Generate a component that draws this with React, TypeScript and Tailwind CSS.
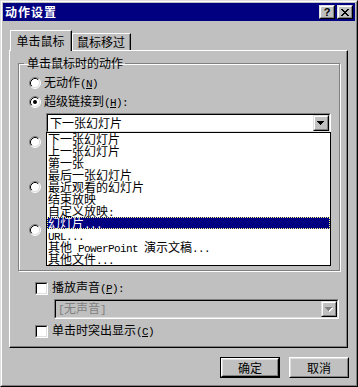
import React from 'react';

const mono = "font-['Liberation_Mono',monospace] text-[11px] tracking-[-0.6px]";
const ARROW = 'M0 0h7v1H0zM1 1h5v1H1zM2 2h3v1H2zM3 3h1v1H3z';
const CLOSE =
    'M0 0h2v1H0zM6 0h2v1H6zM1 1h2v1H1zM5 1h2v1H5zM2 2h4v1H2zM3 3h2v1H3zM2 4h4v1H2zM1 5h2v1H1zM5 5h2v1H5zM0 6h2v1H0zM6 6h2v1H6z';

// splits a label into CJK runs and half-width latin runs; "&X" marks the mnemonic
const Txt: React.FC<{ t: string }> = ({ t }) => {
    const parts = t.match(/[\x00-\x7f]+|[^\x00-\x7f]+/g) || [];
    return (
        <>
            {parts.map((p, i) => {
                if (!/^[\x00-\x7f]/.test(p)) return <span key={i}>{p}</span>;
                const amp = p.indexOf('&');
                if (amp < 0) return <span key={i} className={mono}>{p}</span>;
                return (
                    <span key={i} className={mono}>
                        {p.slice(0, amp)}
                        <span className="underline underline-offset-[1px]">{p[amp + 1]}</span>
                        {p.slice(amp + 2)}
                    </span>
                );
            })}
        </>
    );
};

const Radio: React.FC<{ checked?: boolean }> = ({ checked }) => (
    <svg width="12" height="12" viewBox="0 0 12 12" className="shrink-0">
        <circle cx="6" cy="6" r="5" fill="#fff" />
        <path d="M2.11 9.89A5.5 5.5 0 0 1 9.89 2.11" fill="none" stroke="#808080" />
        <path d="M9.89 2.11A5.5 5.5 0 0 1 2.11 9.89" fill="none" stroke="#fff" />
        <path d="M2.82 9.18A4.5 4.5 0 0 1 9.18 2.82" fill="none" stroke="#000" />
        <path d="M9.18 2.82A4.5 4.5 0 0 1 2.82 9.18" fill="none" stroke="#dfdfdf" />
        {checked && <circle cx="6" cy="6" r="2" fill="#000" />}
    </svg>
);

const Check = () => (
    <div className="w-[13px] h-[13px] shrink-0 border border-t-[#808080] border-l-[#808080] border-r-white border-b-white">
        <div className="h-full bg-white border border-t-black border-l-black border-r-[#dfdfdf] border-b-[#dfdfdf]" />
    </div>
);

const Raised: React.FC<{ className?: string; children?: React.ReactNode }> = ({ className = '', children }) => (
    <div className={`shrink-0 border border-t-[#dfdfdf] border-l-[#dfdfdf] border-r-black border-b-black ${className}`}>
        <div className="h-full bg-[#c0c0c0] border border-t-white border-l-white border-r-[#808080] border-b-[#808080] flex items-center justify-center">
            {children}
        </div>
    </div>
);

const Arrow: React.FC<{ disabled?: boolean }> = ({ disabled }) => (
    <svg width="8" height="5" viewBox="0 0 8 5">
        {disabled && <path d={ARROW} fill="#fff" transform="translate(1 1)" />}
        <path d={ARROW} fill={disabled ? '#808080' : '#000'} />
    </svg>
);

const Combo: React.FC<{ value?: string; disabled?: boolean; className?: string; children?: React.ReactNode }> = ({
    value = '',
    disabled,
    className = '',
    children,
}) => (
    <div className={`relative w-[285px] h-[20px] border border-t-[#808080] border-l-[#808080] border-r-white border-b-white ${className}`}>
        <div
            className={`h-full flex items-center border border-t-black border-l-black border-r-[#dfdfdf] border-b-[#dfdfdf] ${
                disabled ? 'bg-[#c0c0c0] text-[#808080]' : 'bg-white'
            }`}
        >
            <span className="flex-1 pl-[2px] whitespace-pre">
                <Txt t={value} />
            </span>
            <Raised className="w-[16px] h-[16px]">
                <Arrow disabled={disabled} />
            </Raised>
        </div>
        {children}
    </div>
);

const Option: React.FC<{ label?: string; checked?: boolean; className?: string }> = ({ label, checked, className = '' }) => (
    <div className={`h-[16px] flex items-center gap-[3px] whitespace-pre ${className}`}>
        <Radio checked={checked} />
        {label && (
            <span>
                <Txt t={label} />
            </span>
        )}
    </div>
);

const CheckRow: React.FC<{ label: string; className?: string }> = ({ label, className = '' }) => (
    <div className={`h-[16px] flex items-center gap-[4px] whitespace-pre ${className}`}>
        <Check />
        <span>
            <Txt t={label} />
        </span>
    </div>
);

const Button: React.FC<{ label: string; isDefault?: boolean }> = ({ label, isDefault }) => (
    <div className={`w-[60px] h-[21px] ${isDefault ? 'border border-black' : ''}`}>
        <div className="h-full border border-t-white border-l-white border-r-black border-b-black">
            <div className="h-full border border-t-[#dfdfdf] border-l-[#dfdfdf] border-r-[#808080] border-b-[#808080] flex items-center justify-center">
                {label}
            </div>
        </div>
    </div>
);

const LINKS = [
    '下一张幻灯片',
    '上一张幻灯片',
    '第一张',
    '最后一张幻灯片',
    '最近观看的幻灯片',
    '结束放映',
    '自定义放映:',
    '幻灯片...',
    'URL...',
    '其他 PowerPoint 演示文稿...',
    '其他文件...',
];
const SELECTED = 7;

export default function App() {
    return (
        <div className="w-[358px] h-[387px] bg-[#c0c0c0] font-['Noto_Sans_CJK_SC',sans-serif] text-[12px] leading-[12px] text-black select-none">
            <div className="h-full border border-t-[#dfdfdf] border-l-[#dfdfdf] border-r-black border-b-black">
                <div className="h-full p-px flex flex-col border border-t-white border-l-white border-r-[#808080] border-b-[#808080]">
                    {/* title bar */}
                    <div className="h-[18px] shrink-0 bg-[#000080] flex items-center px-[2px]">
                        <span className="text-white font-bold tracking-[1px]">动作设置</span>
                        <div className="ml-auto flex gap-[2px]">
                            <Raised className="w-[16px] h-[14px]">
                                <span className="font-['Liberation_Sans',sans-serif] font-bold text-[11px] leading-none">?</span>
                            </Raised>
                            <Raised className="w-[16px] h-[14px]">
                                <svg width="8" height="7" viewBox="0 0 8 7">
                                    <path d={CLOSE} fill="#000" />
                                </svg>
                            </Raised>
                        </div>
                    </div>

                    {/* tabs */}
                    <div className="mt-[9px] ml-[7px] h-[20px] flex items-end">
                        <div className="relative z-10 -mb-px w-[62px] h-[21px] bg-[#c0c0c0] border-t border-l border-r border-t-white border-l-white border-r-black">
                            <div className="h-full border-r border-r-[#808080] flex items-center justify-center">单击鼠标</div>
                        </div>
                        <div className="w-[59px] h-[17px] border-t border-l border-r border-t-white border-l-white border-r-black">
                            <div className="h-full border-r border-r-[#808080] flex items-center justify-center">鼠标移过</div>
                        </div>
                    </div>

                    {/* tab page */}
                    <div className="ml-[6px] w-[339px] h-[298px] border border-t-white border-l-white border-r-black border-b-black">
                        <div className="h-full pl-[8px] pt-[6px] border-r border-b border-r-[#808080] border-b-[#808080]">
                            <fieldset className="w-[322px] h-[214px] border border-[#808080] shadow-[1px_1px_0_#fff,inset_1px_1px_0_#fff]">
                                <legend className="ml-[5px] pl-[3px] pr-[2px] leading-[12px]">单击鼠标时的动作</legend>
                                <div className="pl-[10px]">
                                    <Option label="无动作(&N)" className="mt-[6px]" />
                                    <Option label="超级链接到(&H):" checked className="mt-[3px]" />
                                    <Combo value="下一张幻灯片" className="ml-[17px] mt-[3px]">
                                        <ul className="absolute z-20 -left-px top-full w-[285px] h-[134px] bg-white border border-black">
                                            {LINKS.map((l, i) => (
                                                <li
                                                    key={l}
                                                    className={`h-[12px] pl-[1px] whitespace-pre ${
                                                        i === SELECTED
                                                            ? 'bg-[#000080] text-white outline outline-1 outline-dotted outline-[#ffff80] -outline-offset-1'
                                                            : ''
                                                    }`}
                                                >
                                                    <Txt t={l} />
                                                </li>
                                            ))}
                                        </ul>
                                    </Combo>
                                    {/* options hidden under the open list */}
                                    <Option className="mt-[1px]" />
                                    <Combo disabled className="ml-[17px] mt-[3px]" />
                                    <Option className="mt-[6px]" />
                                    <Combo disabled className="ml-[17px] mt-[3px]" />
                                    <Option className="mt-[4px]" />
                                    <Combo disabled className="ml-[17px] mt-[3px]" />
                                </div>
                            </fieldset>

                            <CheckRow label="播放声音(&P):" className="mt-[9px] ml-[17px]" />
                            <Combo value="[无声音]" disabled className="ml-[36px] mt-[3px]" />
                            <CheckRow label="单击时突出显示(&C)" className="mt-[4px] ml-[17px]" />
                        </div>
                    </div>

                    {/* buttons */}
                    <div className="mt-[9px] pr-[6px] flex justify-end gap-[9px]">
                        <Button label="确定" isDefault />
                        <Button label="取消" />
                    </div>
                </div>
            </div>
        </div>
    );
}
